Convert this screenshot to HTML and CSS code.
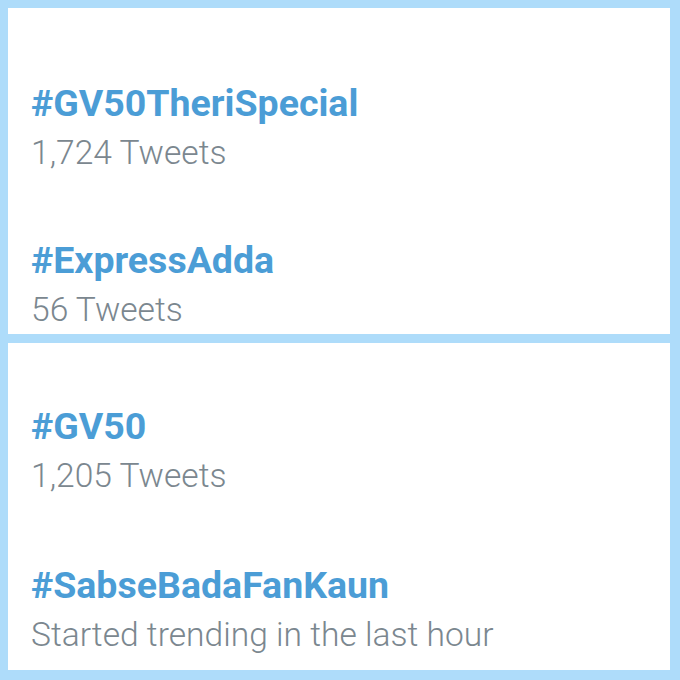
FILE: index.html
```html
<!DOCTYPE html>
<html lang="en">
<head>
    <meta charset="UTF-8">
    <meta name="viewport" content="width=device-width, initial-scale=1.0">
    <title>Trends</title>
    <link rel="stylesheet" href="styles.css">
</head>
<body>
    <div class="panel panel-top">
        <div class="trend">
            <div class="tag">#GV50TheriSpecial</div>
            <div class="count">1,724 Tweets</div>
        </div>
        <div class="trend">
            <div class="tag">#ExpressAdda</div>
            <div class="count">56 Tweets</div>
        </div>
    </div>

    <div class="panel panel-bottom">
        <div class="trend">
            <div class="tag">#GV50</div>
            <div class="count">1,205 Tweets</div>
        </div>
        <div class="trend">
            <div class="tag">#SabseBadaFanKaun</div>
            <div class="count">Started trending in the last hour</div>
        </div>
    </div>
</body>
</html>
```

FILE: styles.css
```css
html, body {
    margin: 0;
    height: 680px;
}
body {
    font-family: Roboto, "Liberation Sans", sans-serif;
    background-color: #aedcfa;
    box-sizing: border-box;
    padding: 8px 10px 10px 8px;
    display: flex;
    flex-direction: column;
    gap: 9px;
    overflow: hidden;
}
.panel {
    background-color: #fff;
    display: flex;
    flex-direction: column;
    padding-left: 23px;
    box-sizing: border-box;
}
.panel-top {
    height: 326px;
    padding-top: 75px;
    gap: 57px;
}
.panel-bottom {
    flex: 1;
    padding-top: 63px;
    gap: 59px;
}
.tag {
    color: #4b9dd6;
    font-weight: bold;
    font-size: 37.5px;
    line-height: 40px;
}
.count {
    color: #7b878f;
    font-weight: 300;
    font-size: 33.6px;
    line-height: 60px;
}
```
